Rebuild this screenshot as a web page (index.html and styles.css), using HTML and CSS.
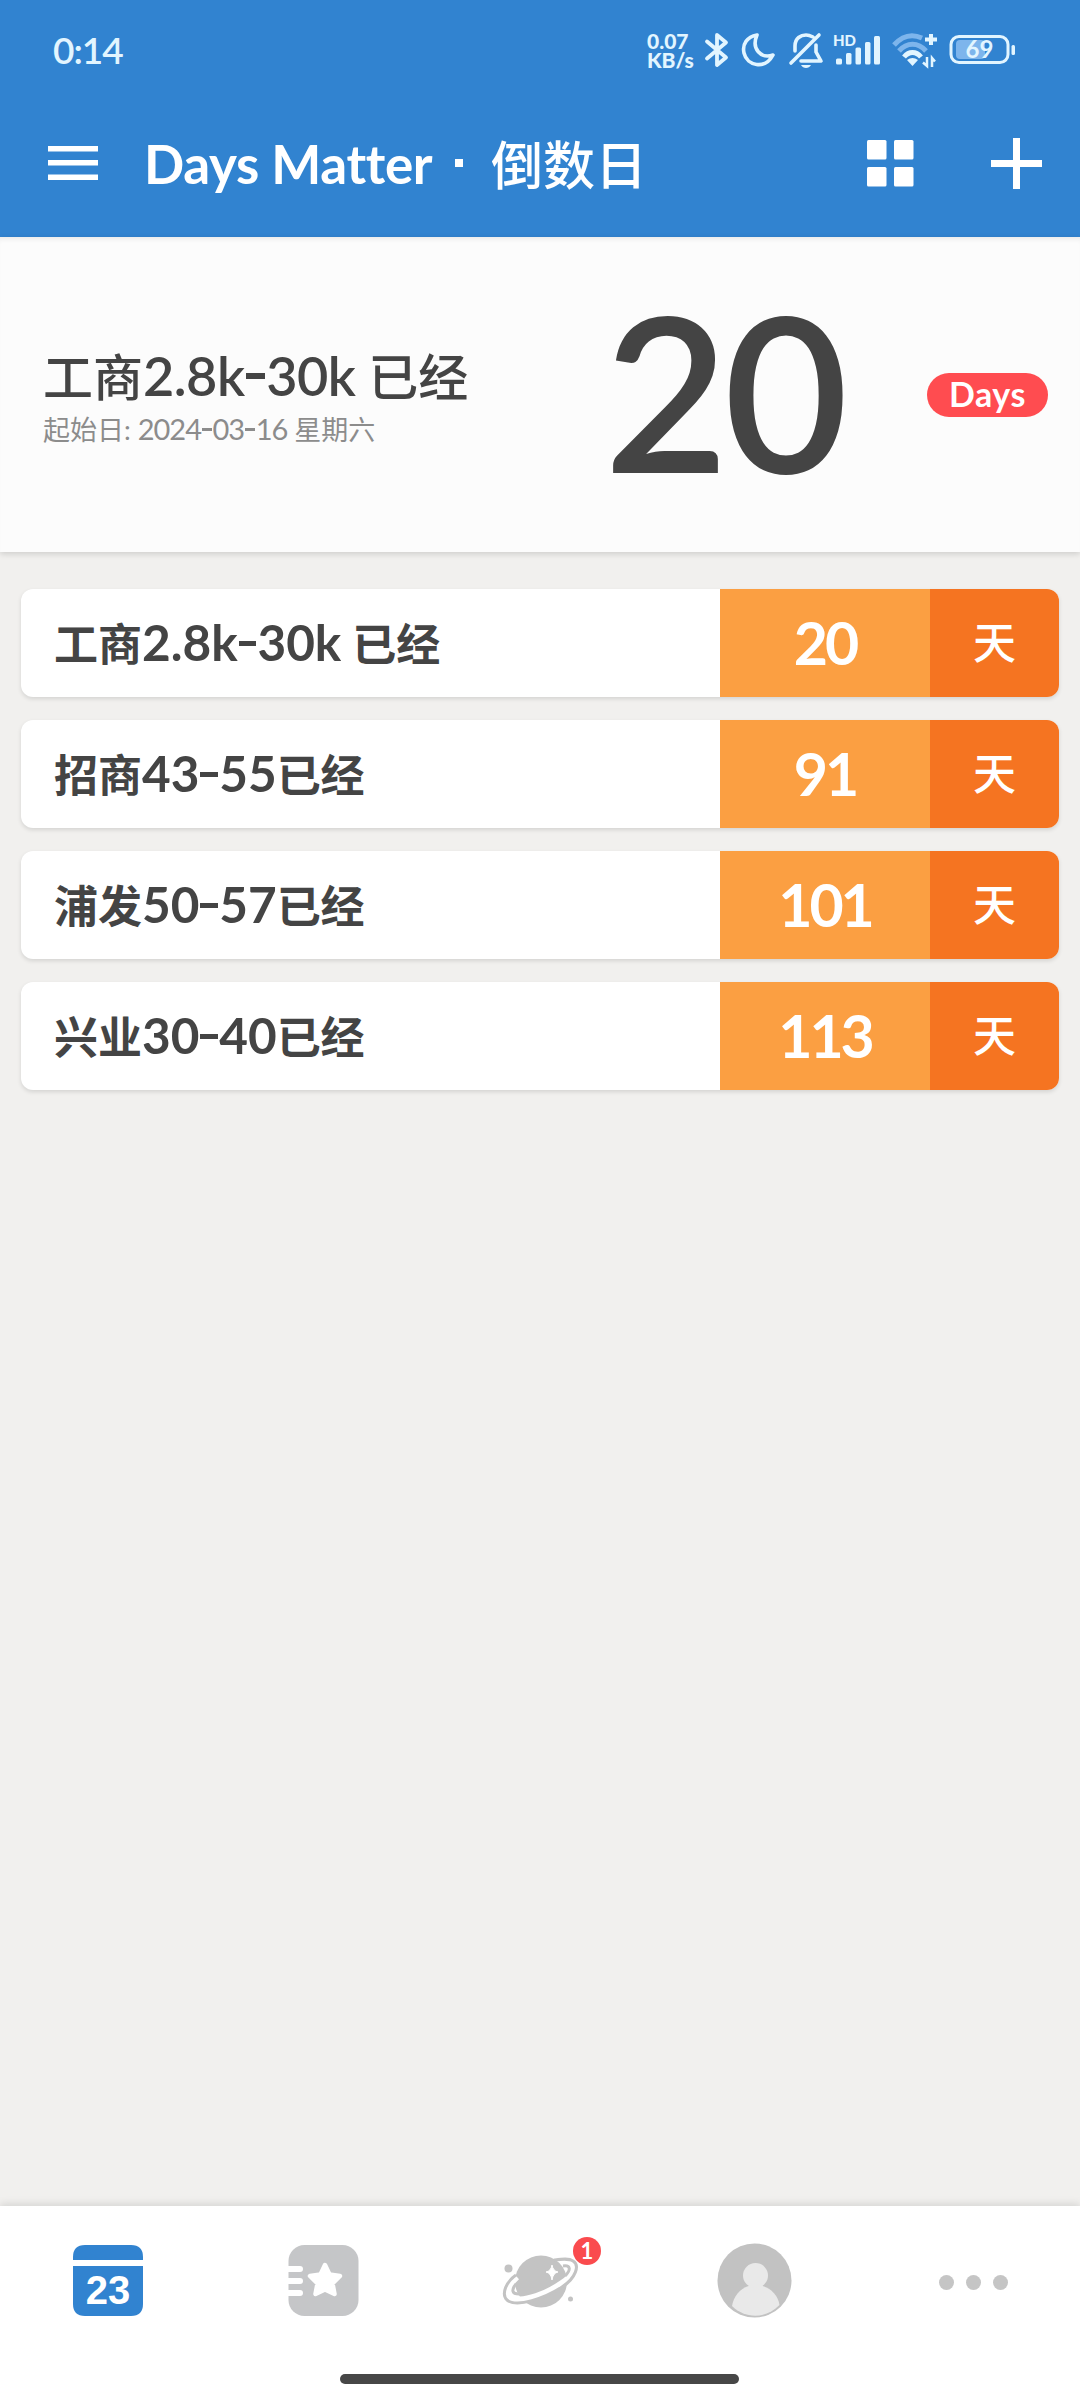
FILE: index.html
```html
<!DOCTYPE html>
<html lang="zh-CN">
<head>
    <meta charset="utf-8">
    <title>Days Matter · 倒数日</title>
    <link rel="stylesheet" href="styles.css">
</head>
<body>

<header class="header">
    <div class="status">
        <span class="clock">0:14</span>
        <div class="status-icons">
            <div class="speed"><span>0.07</span><span>KB/s</span></div>
            <svg width="24" height="38" viewBox="0 0 24 38" fill="none" stroke="#e2f5ff" stroke-width="3.8" stroke-linejoin="round" stroke-linecap="round">
                <path d="M2 10.500L21 26.500L12 34V4L21 11.500L2 27.500"/>
            </svg>
            <svg width="38" height="38" viewBox="0 0 38 38" fill="none" stroke="#e2f5ff" stroke-width="3.600" stroke-linejoin="round">
                <path d="M18 4C8 6 3 13 5 22C8 35 26 39 34 24C22 28 12 18 18 4Z"/>
            </svg>
            <svg width="38" height="38" viewBox="0 0 38 38" fill="none" stroke="#e2f5ff" stroke-width="3.600" stroke-linecap="round" stroke-linejoin="round">
                <path d="M8 20V15C8 7 14 4 19 4C22 4 24 5 26 6M29 14V21L34 30H14M4 32L32 4"/>
                <path d="M14 34H24C22 38 16 38 14 34Z" fill="#e2f5ff" stroke="none"/>
            </svg>
            <svg width="46" height="38" viewBox="0 0 46 38" fill="#e2f5ff">
                <text class="hd" x="-2" y="15">HD</text>
                <rect x="1" y="27.500" width="6" height="6" rx="1.500"/>
                <rect x="11" y="22" width="5.500" height="11.500" rx="1.500"/>
                <rect x="20.500" y="16.500" width="5.500" height="17" rx="1.500"/>
                <rect x="30" y="11" width="5.500" height="22.500" rx="1.500"/>
                <rect x="39" y="5" width="6" height="28.500" rx="1.500"/>
            </svg>
            <svg width="48" height="38" viewBox="0 0 48 38" fill="none" stroke-width="5">
                <path d="M3 14C12 4 22 3 31 7" stroke="#7db5ec"/>
                <path d="M8 20C16 11 27 11 35 20" stroke="#7db5ec"/>
                <path d="M13 26C18 20 25 20 30 26" stroke="#e2f5ff"/>
                <path d="M16 29Q21.500 25 27 29L21.500 35Z" fill="#e2f5ff"/>
                <path d="M40 3V14M34 8.500H46" stroke="#e2f5ff" stroke-width="4"/>
                <path d="M36 26V35L32 31.500M41 36V27L44 30.500" stroke="#e2f5ff" stroke-width="2.500"/>
            </svg>
            <svg width="67" height="38" viewBox="0 0 67 38">
                <rect x="7" y="9" width="29" height="19" rx="4" fill="#7db5ec"/>
                <rect x="2" y="5.500" width="57" height="26" rx="8" fill="none" stroke="#e2f5ff" stroke-width="3"/>
                <rect x="62.500" y="14" width="3.500" height="10" rx="1.500" fill="#e2f5ff"/>
                <text class="battery" x="30.500" y="27" text-anchor="middle">69</text>
            </svg>
        </div>
    </div>
    <div class="toolbar">
        <svg class="menu" width="50" height="34" viewBox="0 0 50 34" fill="#fff">
            <rect width="50" height="5.500"/><rect y="14" width="50" height="5.500"/><rect y="28.500" width="50" height="5.500"/>
        </svg>
        <h1><span>Days Matter</span><i></i><b>倒数日</b></h1>
        <svg class="views" width="47" height="47" viewBox="0 0 47 47" fill="#fff">
            <rect width="19.500" height="19.500" rx="1.500"/><rect x="27" width="19.500" height="19.500" rx="1.500"/>
            <rect y="27" width="19.500" height="19.500" rx="1.500"/><rect x="27" y="27" width="19.500" height="19.500" rx="1.500"/>
        </svg>
        <svg width="51" height="51" viewBox="0 0 51 51" fill="#fff">
            <rect x="22" width="7" height="51"/><rect y="22" width="51" height="7"/>
        </svg>
    </div>
</header>

<section class="top-event">
    <div class="info">
        <h2>工商<span class="num">2.8k<s></s>30k</span> 已经</h2>
        <p>起始日: <span class="num">2024<s></s>03<s></s>16</span> 星期六</p>
    </div>
    <div class="big">20</div>
    <div class="unit">Days</div>
</section>

<ul class="events">
    <li><span class="name">工商<span class="num">2.8k<s></s>30k</span> 已经</span><span class="count">20</span><span class="day">天</span></li>
    <li><span class="name">招商<span class="num">43<s></s>55</span>已经</span><span class="count">91</span><span class="day">天</span></li>
    <li><span class="name">浦发<span class="num">50<s></s>57</span>已经</span><span class="count">101</span><span class="day">天</span></li>
    <li><span class="name">兴业<span class="num">30<s></s>40</span>已经</span><span class="count">113</span><span class="day">天</span></li>
</ul>

<nav class="tabs">
    <a>
        <svg width="76" height="76" viewBox="0 0 76 76">
            <path d="M3 17V14Q3 2 15 2H61Q73 2 73 14V17ZM3 23H73V61Q73 73 61 73H15Q3 73 3 61Z" fill="#3183d0"/>
            <text class="date" x="38" y="60.500" text-anchor="middle">23</text>
        </svg>
    </a>
    <a>
        <svg width="76" height="76" viewBox="0 0 76 76">
            <rect x="2.500" y="2" width="70" height="71" rx="16" fill="#c5c6c8"/>
            <path d="M0 26H14M0 38H14M0 50H14" stroke="#fff" stroke-width="6" stroke-linecap="round"/>
            <path d="M39 22L43.500 31.500L54 33L46.500 40.500L48.500 51L39 46.500L29.500 51L31.500 40.500L24 33L34.500 31.500Z" fill="#fff" stroke="#fff" stroke-width="4.500" stroke-linejoin="round"/>
        </svg>
    </a>
    <a class="planet">
        <svg width="76" height="76" viewBox="0 0 76 76">
            <circle cx="39" cy="38.500" r="26" fill="#c3c3c3"/>
            <!-- ring: white band over the front of the planet, thin outlines on both edges -->
            <path d="M15 34C6 42 2 52 10 55C22 60 46 50 60 40C73 31 76 21 65 19" fill="none" stroke="#fff" stroke-width="6"/>
            <path d="M14 32C4 39 -1 51 5 57C15 65 43 55 60 44C74 35 78 22 71 18C67 15 60 16 52 17" fill="none" stroke="#c3c3c3" stroke-width="3"/>
            <path d="M14 41C9 47 10 51 17 51M61 23C69 22 69 27 63 33" fill="none" stroke="#c3c3c3" stroke-width="3"/>
            <path d="M50 22Q51 28 56 29Q51 30 50 37Q49 30 44 29Q49 28 50 22Z" fill="#fff" stroke="#fff"/>
            <circle cx="6.500" cy="25.500" r="4" fill="#c3c3c3"/>
            <circle cx="68.500" cy="56" r="2.500" fill="#c3c3c3"/>
        </svg>
        <em class="badge">1</em>
    </a>
    <a>
        <svg width="76" height="76" viewBox="0 0 76 76">
            <circle cx="36.500" cy="37.500" r="37" fill="#c2c2c2"/>
            <circle cx="37.500" cy="32.500" r="12.500" fill="#e9e9e9"/>
            <path d="M14 63C16 51 25 42 37.500 42S60 51 61.500 62C48 76 27 76 14 63Z" fill="#e9e9e9"/>
        </svg>
    </a>
    <a>
        <svg width="76" height="76" viewBox="0 0 76 76" fill="#c5c5c5">
            <circle cx="12.500" cy="39.500" r="7.500"/><circle cx="39.500" cy="39.500" r="7.500"/><circle cx="66.500" cy="39.500" r="7.500"/>
        </svg>
    </a>
    <div class="home-bar"></div>
</nav>

</body>
</html>
```
FILE: styles.css
```css
* {
    box-sizing: border-box;
}
body {
    margin: 0;
    width: 1080px;
    height: 2400px;
    display: flex;
    flex-direction: column;
    background: #f1f0ee;
    color: #444;
    font-family: Lato, "Noto Sans CJK SC", sans-serif;
    font-variant-ligatures: none;
    overflow: hidden;
}
h1, h2, p, ul {
    margin: 0;
    padding: 0;
    font-weight: 500;
}
svg {
    display: block;
    flex: none;
    overflow: visible;
}

/* header */
.header {
    height: 237px;
    background: #3183d0;
    color: #fff;
}
.status {
    height: 100px;
    padding: 0 64px 0 53px;
    display: flex;
    align-items: center;
    justify-content: space-between;
    color: #e2f5ff;
}
.clock {
    padding-bottom: 2px;
    font-size: 37px;
    font-weight: 600;
    letter-spacing: -1px;
}
.status-icons {
    display: flex;
    gap: 10px;
}
.speed {
    width: 48px;
    display: flex;
    flex-direction: column;
    justify-content: center;
    font-size: 21px;
    font-weight: 900;
    line-height: 19px;
    white-space: nowrap;
}
.hd {
    font-size: 15px;
    font-weight: 900;
}
.battery {
    font-size: 24px;
    font-weight: 700;
    fill: #e2f5ff;
}
.toolbar {
    height: 126px;
    padding: 0 38px 0 48px;
    display: flex;
    align-items: center;
}
h1 {
    flex: 1;
    margin-left: 46px;
    display: flex;
    align-items: center;
    font-size: 53px;
    font-weight: 700;
    white-space: nowrap;
}
h1 span {
    width: 289px;
    letter-spacing: -.4px;
}
h1 i {
    width: 8px;
    height: 8px;
    margin: 0 28px 0 22px;
    background: #fff;
}
h1 b {
    font-family: "Noto Sans CJK SC", sans-serif;
    font-weight: 500;
    font-size: 52px;
    line-height: 60px;
}
.views {
    margin-right: 77px;
}

/* pinned event */
.top-event {
    height: 315px;
    padding: 0 32px 0 43px;
    display: flex;
    align-items: center;
    background: #fcfcfc;
    box-shadow: 0 2px 6px rgba(0, 0, 0, .15), inset 0 5px 5px -3px rgba(0, 0, 0, .08);
}
.info {
    width: 538px;
    padding-top: 8px;
    white-space: nowrap;
}
.info h2 {
    font-size: 50px;
    line-height: 60px;
}
.info h2 .num {
    font-size: 54px;
    font-weight: 600;
    letter-spacing: -.5px;
}
.info p {
    font-size: 27px;
    font-weight: 400;
    line-height: 44px;
    color: #8c8c8c;
}
.info p .num {
    font-size: 29px;
    letter-spacing: -1px;
}
/* wide dash between numbers */
s {
    display: inline-block;
    width: .36em;
    height: .1em;
    margin: 0 .02em;
    vertical-align: .31em;
    background: currentColor;
}
.big {
    width: 300px;
    margin-right: auto;
    padding: 0 0 10px 23px;
    font-size: 215px;
    font-weight: 600;
    letter-spacing: -5px;
    line-height: 290px;
}
.unit {
    width: 121px;
    height: 44px;
    border-radius: 22px;
    background: #ff4c50;
    color: #fff;
    font-size: 34px;
    font-weight: 700;
    letter-spacing: .6px;
    line-height: 42px;
    text-align: center;
}

/* list */
.events {
    flex: 1;
    padding: 37px 21px 0;
    list-style: none;
}
.events li {
    height: 108px;
    margin-bottom: 23px;
    display: flex;
    align-items: center;
    border-radius: 12px;
    background: #fff;
    box-shadow: 0 2px 4px rgba(0, 0, 0, .12);
    line-height: 108px;
    overflow: hidden;
    white-space: nowrap;
}
.name {
    flex: 1;
    padding: 0 0 0 33px;
    font-size: 44px;
    font-weight: 600;
}
.name .num {
    font-size: 49.5px;
    font-weight: 700;
}
.count {
    width: 210px;
    background: #fb9f42;
    color: #fff;
    font-size: 59px;
    font-weight: 700;
    letter-spacing: -3px;
    text-align: center;
}
.day {
    width: 129px;
    background: #f57421;
    color: #fff;
    font-size: 43px;
    font-weight: 500;
    text-align: center;
}

/* tab bar */
.tabs {
    position: relative;
    height: 194px;
    padding-top: 37px;
    display: flex;
    background: #fff;
    box-shadow: 0 -2px 8px rgba(0, 0, 0, .12);
}
.tabs a {
    width: 216px;
    display: flex;
    justify-content: center;
}
.planet {
    position: relative;
}
.badge {
    position: absolute;
    left: 141px;
    top: -6px;
    width: 28px;
    height: 28px;
    border-radius: 50%;
    background: #fa4b4e;
    color: #fff;
    font-size: 22px;
    font-style: normal;
    font-weight: 700;
    line-height: 28px;
    text-align: center;
}
.date {
    font-family: "Liberation Sans", sans-serif;
    font-size: 40px;
    font-weight: 700;
    fill: #fff;
}
.home-bar {
    position: absolute;
    left: 340px;
    bottom: 16px;
    width: 399px;
    height: 10px;
    border-radius: 5px;
    background: #474747;
}
```
